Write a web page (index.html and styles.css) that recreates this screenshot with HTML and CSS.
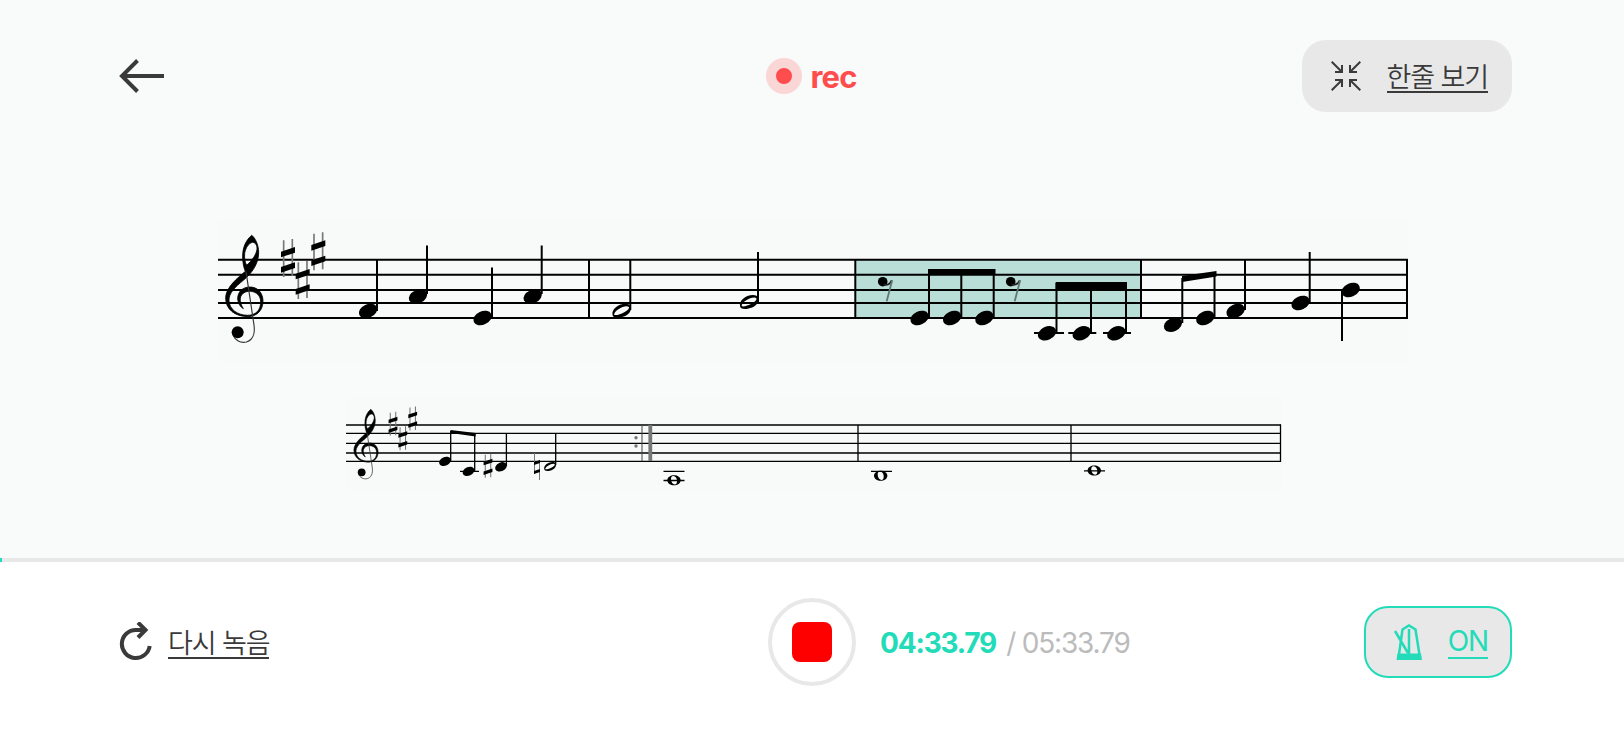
FILE: index.html
```html
<!DOCTYPE html>
<html lang="ko">
<head>
<meta charset="utf-8">
<title>rec</title>
<link rel="stylesheet" href="styles.css">
</head>
<body>
<svg class="defs" aria-hidden="true">
  <defs>
    <g id="clef">
      <path stroke="#000" stroke-width="2.500" d="M155 76C148 82 129 100 128 135C127 160 134 180 136 184C115 202 77 232 77 264C77 298 105 320 145 320C172 319 189 300 189 273C189 248 172 231 150 231C127 231 113 246 113 267C114 280 121 291 130 296C124 286 119 276 121 264C124 250 137 243 152 244C170 246 182 257 182 276C182 300 168 316 142 316C112 315 88 298 87 272C86 250 104 232 130 211C153 192 176 163 176 128C176 101 163 81 155 76ZM157 97C166 97 172 106 171 118C168 136 156 151 140 166C134 155 133 145 134 130C137 113 146 100 157 97Z"/>
      <path d="M138 184L162 345C166 372 157 391 139 396C121 400 105 391 100 376" fill="none" stroke="#333" stroke-width="3.500"/>
      <circle cx="113" cy="367" r="18"/>
    </g>
    <g id="sharp">
      <path d="M-13-54V56M13-58V53" stroke="#777" stroke-width="5" fill="none"/>
      <path d="M-21-20L21-34V-17L-21-3ZM-21 26L21 12V29L-21 43Z"/>
    </g>
    <g id="rest">
      <circle r="4.800"/>
      <path d="M1 3Q7 4 9-1.500" stroke="#222" stroke-width="1.800" fill="none"/>
      <path d="M9.500-1.500L4 19.500" stroke="#5f7a75" stroke-width="1.800" fill="none"/>
    </g>
    <ellipse id="head" rx="9.600" ry="6.700" transform="rotate(-25)"/>
    <path id="half" fill-rule="evenodd" d="M-9 4C-10-1-4-7 4-7C9-7 10-4 9 0C7 5 0 7-4 7C-7 7-9 6-9 4ZM-7.300 4C-5 6 8.500 0 7.500-3.500C5-7-8 0-7.300 4Z"/>
    <path id="whole" fill-rule="evenodd" d="M-6.700 0C-6.700-3-3.500-5 0-5S6.700-3 6.700 0S3.500 5 0 5S-6.700 3-6.700 0ZM-3-1.500C-3 2-1 4.300 1 4.200C3 4 3 2 3 .5C3-2 1.500-4.300-.8-4.200C-2.600-4-3-2.500-3-1.500Z"/>
  </defs>
</svg>

<main class="stage">
  <header class="topbar">
    <button class="back" aria-label="back">
      <svg width="48" height="36" viewBox="118 58 48 36"><path d="M164 76H122M137.500 60.500L122 76L137.500 91.500" fill="none" stroke="currentColor" stroke-width="4"/></svg>
    </button>
    <div class="rec"><span class="rec-dot"></span><span class="rec-label">rec</span></div>
    <button class="pill">
      <svg width="30" height="30" viewBox="0 0 30 30" fill="none" stroke="currentColor" stroke-width="2"><path d="M.7.700L11 11M4 11H11V4M29.300.700L19 11M26 11H19V4M.7 29.300L11 19M4 19H11V26M29.300 29.300L19 19M26 19H19V26"/></svg>
      <span class="link">한줄 보기</span>
    </button>
  </header>

  <section class="scores">
    <svg class="score score-current" viewBox="218 220 1190 142">
      <rect x="855" y="260" width="286" height="58" fill="#b9ddd7"/>
      <g stroke="#000" stroke-width="2" fill="none">
        <path d="M218 259.700H1408M218 274.700H1408M218 290H1408M218 303H1408M218 318H1408"/>
        <path d="M589 259V318M855.300 259V318M1141 259V318M1407 259V319"/>
        <path d="M377 260V311M427 245.500V294M492 267.500V318M541.700 245.500V294M630.300 260V310M758 252V302"/>
        <path d="M929 270V318M961.300 270V318M993.700 270V318M1056.500 283V333M1091 283V333M1126 283V333"/>
        <path d="M1182.300 278V323M1214.500 272V318M1245 260V310M1309.700 252V302M1342 291V341"/>
        <path d="M1034 333H1064M1068.300 333H1096.300M1103 333H1131"/>
      </g>
      <path d="M928 269H995.500V275H928ZM1055.700 282H1127V290.500H1055.700ZM1182 276L1216.500 271V276.500L1182 282Z"/>
      <g transform="translate(200 210) scale(.3333)">
        <use href="#clef"/>
        <use href="#sharp" x="264" y="145"/>
        <use href="#sharp" x="308" y="211"/>
        <use href="#sharp" x="355" y="125"/>
      </g>
      <use href="#head" transform="translate(368 311)"/>
      <use href="#head" transform="translate(418 296.500)"/>
      <use href="#head" transform="translate(482.500 318)"/>
      <use href="#head" transform="translate(532.700 296.500)"/>
      <use href="#half" transform="translate(621.500 310.700)"/>
      <use href="#half" transform="translate(749 302)"/>
      <use href="#rest" transform="translate(882.700 281.700)"/>
      <use href="#head" transform="translate(919.500 318)"/>
      <use href="#head" transform="translate(952 318)"/>
      <use href="#head" transform="translate(984.300 318)"/>
      <use href="#rest" transform="translate(1010.700 281.700)"/>
      <use href="#head" transform="translate(1047 333.300)"/>
      <use href="#head" transform="translate(1081.700 333.300)"/>
      <use href="#head" transform="translate(1116.300 333.300)"/>
      <use href="#head" transform="translate(1173 324.700)"/>
      <use href="#head" transform="translate(1205.200 318)"/>
      <use href="#head" transform="translate(1235.500 311)"/>
      <use href="#head" transform="translate(1300.500 303)"/>
      <use href="#head" transform="translate(1350.700 290)"/>
    </svg>
    <svg class="score score-next" viewBox="346 398 936 92">
      <g stroke="#000" stroke-width="1.300" fill="none">
        <path d="M346 425H1281M346 433.400H1281M346 443.400H1281M346 453H1281M346 461.400H1281"/>
        <path d="M858 425V461M1071 425V461M1280.500 424.500V462"/>
        <path d="M450.700 431V461M474.700 434V471M506.400 433V466M555.700 433V465"/>
        <path d="M460 471.400H479M663.500 471.400H684.500M663.500 480.500H684.500M871 471.400H892M1084 470.800H1105"/>
        <path d="M642 425V461" stroke="#444" stroke-width="1"/>
        <path d="M650.300 425V461" stroke="#777" stroke-width="3.800"/>
      </g>
      <path d="M450.500 430L475.700 433V436.500L450.500 433Z"/>
      <g fill="#777"><circle cx="636" cy="437.700" r="1.700"/><circle cx="636" cy="446" r="1.700"/></g>
      <g transform="translate(337.200 392.900) scale(.2165)"><use href="#clef"/></g>
      <use href="#sharp" transform="translate(393 424) scale(.21)"/>
      <use href="#sharp" transform="translate(402.800 438.500) scale(.21)"/>
      <use href="#sharp" transform="translate(412.700 418.800) scale(.21)"/>
      <use href="#sharp" transform="translate(488 466) scale(.21)"/>
      <path d="M534.500 453V474M539.500 460V480" stroke="#777" stroke-width="1"/>
      <path d="M534 462L540 460V463L534 465ZM534 471L540 469V472L534 474Z"/>
      <use href="#head" transform="translate(445 461.400) scale(.64)"/>
      <use href="#head" transform="translate(468.500 471.400) scale(.64)"/>
      <use href="#head" transform="translate(501 466.800) scale(.64)"/>
      <use href="#half" transform="translate(550 466.500) scale(.64)"/>
      <use href="#whole" transform="translate(674 480.300)"/>
      <use href="#whole" transform="translate(880.700 475.800)"/>
      <use href="#whole" transform="translate(1094.300 470.500)"/>
    </svg>
  </section>
</main>

<div class="progress"><div class="progress-fill"></div></div>

<footer class="controls">
  <button class="retry">
    <svg width="34" height="40" viewBox="118 622 34 40" fill="none" stroke="currentColor" stroke-width="4"><path d="M149.700 646A14 14 0 1 1 136 630H145M138 622.500L145.500 630L138 637.500"/></svg>
    <span class="link">다시 녹음</span>
  </button>
  <div class="transport">
    <button class="stop" aria-label="stop"><span class="stop-square"></span></button>
    <div class="time"><strong>04:33.79</strong><span class="total">/ 05:33.79</span></div>
  </div>
  <button class="pill pill-on">
    <svg width="30" height="38" viewBox="1393 623 30 38" fill="none" stroke="currentColor" stroke-width="2.500"><path d="M1398.500 658L1402.500 629.500L1409 625.500L1415.500 629.500L1420 658M1409 629V655M1395 631L1408 653"/><path d="M1397.500 653.500H1421L1422 660H1396.500Z" fill="currentColor" stroke="none"/></svg>
    <span class="link">ON</span>
  </button>
</footer>
</body>
</html>
```
FILE: styles.css
```css
* { box-sizing: border-box; }

body {
  margin: 0;
  width: 1624px;
  height: 750px;
  display: flex;
  flex-direction: column;
  overflow: hidden;
  background: #fff;
  color: #3a3a3a;
  font-family: Inter, "Noto Sans CJK KR", sans-serif;
  font-size: 28px;
}

button {
  display: flex;
  align-items: center;
  padding: 0;
  border: 0;
  background: none;
  color: inherit;
  font: inherit;
}

svg { display: block; flex: none; }

.defs { position: absolute; width: 0; height: 0; }

.stage {
  height: 558px;
  padding-top: 40px;
  background: #f9fbfa;
}

.topbar, .controls {
  display: grid;
  grid-template-columns: 1fr auto 1fr;
  align-items: center;
  padding: 0 112px 0 118px;
}

.topbar { height: 72px; }

.rec {
  display: flex;
  align-items: center;
  gap: 8px;
  margin-right: 7px;
  color: #ff4c4c;
  font-size: 31px;
  font-weight: 700;
  letter-spacing: -.8px;
}

.rec-dot {
  width: 36px;
  height: 36px;
  border: 10px solid #fad6d6;
  border-radius: 50%;
  background: #ff4c4c;
}

.rec-label { padding-top: 2px; line-height: 36px; }

.pill {
  justify-self: end;
  width: 210px;
  height: 72px;
  padding: 0 24px 0 29px;
  justify-content: space-between;
  border-radius: 24px;
  background: #e8e8e8;
}

.pill-on {
  width: 148px;
  padding: 0 22px 0 27px;
  border: 2px solid #22dbb8;
  color: #22dbb8;
}

.link {
  border-bottom: 2px solid currentColor;
  font-family: "Noto Sans CJK KR", sans-serif;
  font-size: 27px;
  font-weight: 350;
  line-height: 31px;
  letter-spacing: -1.1px;
  white-space: nowrap;
}

.pill-on .link {
  padding-top: 3px;
  margin-top: -3px;
  font-family: Inter, sans-serif;
  font-size: 28px;
  font-weight: 400;
  line-height: 31px;
}

.scores {
  display: flex;
  flex-direction: column;
  gap: 36px;
  padding-top: 108px;
}

.score { background: #f8faf9; }
.score-current { width: 1190px; height: 142px; margin-left: 218px; }
.score-next { width: 936px; height: 92px; margin-left: 346px; }

.progress { height: 4px; background: #e8e8e8; }
.progress-fill { width: 2px; height: 4px; background: #22dbb8; }

.controls {
  height: 160px;
  grid-template-columns: 650px 1fr auto;
}

.retry { gap: 16px; }

.transport { display: flex; align-items: center; gap: 24px; }

.stop {
  width: 88px;
  height: 88px;
  justify-content: center;
  border: 4px solid #e8e8e8;
  border-radius: 50%;
}

.stop-square { width: 40px; height: 40px; border-radius: 8px; background: #f00; }

.time {
  display: flex;
  gap: 10px;
  padding-top: 2px;
  color: #bbb;
  font-weight: 400;
  letter-spacing: -1.18px;
  white-space: nowrap;
}
.time strong { color: #22dbb8; font-weight: 700; }
```
